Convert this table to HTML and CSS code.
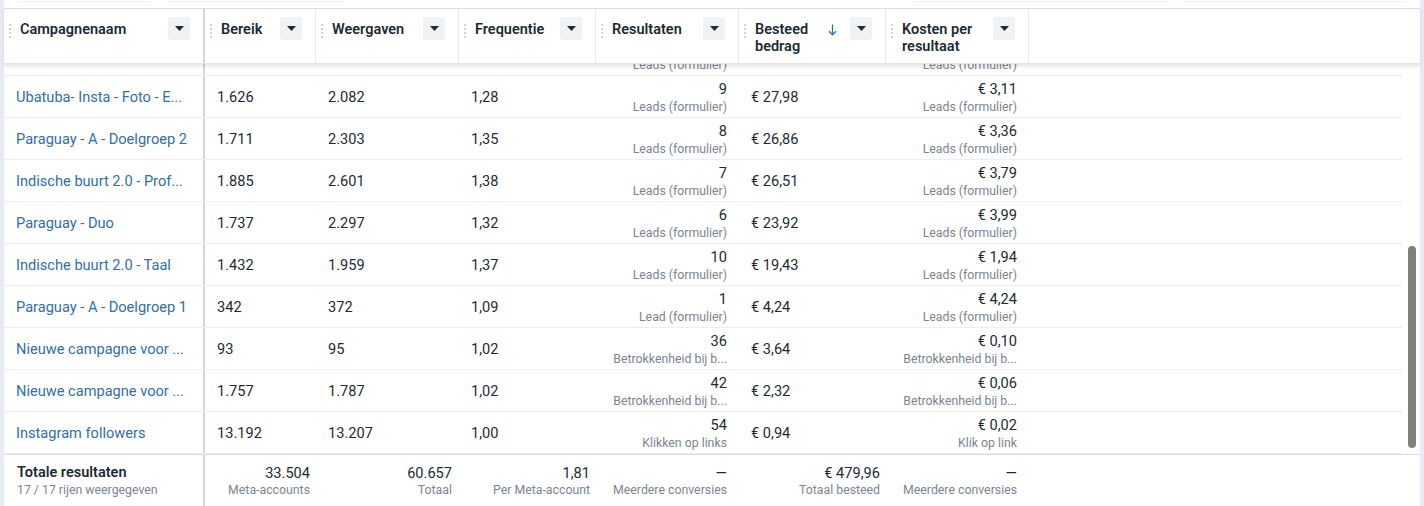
FILE: index.html
```html
<!DOCTYPE html>
<html lang="nl">
<head>
<meta charset="utf-8">
<title>Campagnes</title>
<link rel="stylesheet" href="styles.css">
</head>
<body>
<div class="page">
  <div class="topbar">
    <span class="ghost g1"></span><span class="ghost g2"></span><span class="spacer"></span><span class="ghost g3"></span><span class="ghost g4"></span>
  </div>
  <div class="table">
    <div class="head grid">
      <div class="hc c1"><span class="handle"></span><span class="label">Campagnenaam</span><span class="dd"><svg width="9" height="5" viewBox="0 0 9 5"><path d="M0 0h9L4.5 5z" fill="#1c2b33"/></svg></span></div>
      <div class="hc"><span class="handle"></span><span class="label">Bereik</span><span class="dd"><svg width="9" height="5" viewBox="0 0 9 5"><path d="M0 0h9L4.5 5z" fill="#1c2b33"/></svg></span></div>
      <div class="hc"><span class="handle"></span><span class="label">Weergaven</span><span class="dd"><svg width="9" height="5" viewBox="0 0 9 5"><path d="M0 0h9L4.5 5z" fill="#1c2b33"/></svg></span></div>
      <div class="hc"><span class="handle"></span><span class="label">Frequentie</span><span class="dd"><svg width="9" height="5" viewBox="0 0 9 5"><path d="M0 0h9L4.5 5z" fill="#1c2b33"/></svg></span></div>
      <div class="hc"><span class="handle"></span><span class="label">Resultaten</span><span class="dd"><svg width="9" height="5" viewBox="0 0 9 5"><path d="M0 0h9L4.5 5z" fill="#1c2b33"/></svg></span></div>
      <div class="hc"><span class="handle"></span><span class="label narrow">Besteed bedrag</span><span class="sort"><svg width="9" height="12" viewBox="0 0 9 12"><path d="M4.5 0.5v10M1 7.2l3.5 3.6L8 7.2" fill="none" stroke="#2f70a8" stroke-width="1.3"/></svg></span><span class="dd"><svg width="9" height="5" viewBox="0 0 9 5"><path d="M0 0h9L4.5 5z" fill="#1c2b33"/></svg></span></div>
      <div class="hc"><span class="handle"></span><span class="label narrow2">Kosten per resultaat</span><span class="dd"><svg width="9" height="5" viewBox="0 0 9 5"><path d="M0 0h9L4.5 5z" fill="#1c2b33"/></svg></span></div>
      <div class="hc filler"></div>
    </div>
    <div class="body">
      <div class="rows">
        <div class="row grid partial">
          <div class="c c1"></div>
          <div class="c"></div><div class="c"></div><div class="c"></div>
          <div class="c r"><div class="num">&nbsp;</div><div class="sub">Leads (formulier)</div></div>
          <div class="c"></div>
          <div class="c r"><div class="num">&nbsp;</div><div class="sub">Leads (formulier)</div></div>
          <div class="c"></div>
        </div>
        <div class="row grid">
          <div class="c c1"><a class="name">Ubatuba- Insta - Foto - E...</a></div>
          <div class="c">1.626</div><div class="c">2.082</div><div class="c">1,28</div>
          <div class="c r"><div class="num">9</div><div class="sub">Leads (formulier)</div></div>
          <div class="c">€ 27,98</div>
          <div class="c r"><div class="num">€ 3,11</div><div class="sub">Leads (formulier)</div></div>
          <div class="c"></div>
        </div>
        <div class="row grid">
          <div class="c c1"><a class="name">Paraguay - A - Doelgroep 2</a></div>
          <div class="c">1.711</div><div class="c">2.303</div><div class="c">1,35</div>
          <div class="c r"><div class="num">8</div><div class="sub">Leads (formulier)</div></div>
          <div class="c">€ 26,86</div>
          <div class="c r"><div class="num">€ 3,36</div><div class="sub">Leads (formulier)</div></div>
          <div class="c"></div>
        </div>
        <div class="row grid">
          <div class="c c1"><a class="name">Indische buurt 2.0 - Prof...</a></div>
          <div class="c">1.885</div><div class="c">2.601</div><div class="c">1,38</div>
          <div class="c r"><div class="num">7</div><div class="sub">Leads (formulier)</div></div>
          <div class="c">€ 26,51</div>
          <div class="c r"><div class="num">€ 3,79</div><div class="sub">Leads (formulier)</div></div>
          <div class="c"></div>
        </div>
        <div class="row grid">
          <div class="c c1"><a class="name">Paraguay - Duo</a></div>
          <div class="c">1.737</div><div class="c">2.297</div><div class="c">1,32</div>
          <div class="c r"><div class="num">6</div><div class="sub">Leads (formulier)</div></div>
          <div class="c">€ 23,92</div>
          <div class="c r"><div class="num">€ 3,99</div><div class="sub">Leads (formulier)</div></div>
          <div class="c"></div>
        </div>
        <div class="row grid">
          <div class="c c1"><a class="name">Indische buurt 2.0 - Taal</a></div>
          <div class="c">1.432</div><div class="c">1.959</div><div class="c">1,37</div>
          <div class="c r"><div class="num">10</div><div class="sub">Leads (formulier)</div></div>
          <div class="c">€ 19,43</div>
          <div class="c r"><div class="num">€ 1,94</div><div class="sub">Leads (formulier)</div></div>
          <div class="c"></div>
        </div>
        <div class="row grid">
          <div class="c c1"><a class="name">Paraguay - A - Doelgroep 1</a></div>
          <div class="c">342</div><div class="c">372</div><div class="c">1,09</div>
          <div class="c r"><div class="num">1</div><div class="sub">Lead (formulier)</div></div>
          <div class="c">€ 4,24</div>
          <div class="c r"><div class="num">€ 4,24</div><div class="sub">Leads (formulier)</div></div>
          <div class="c"></div>
        </div>
        <div class="row grid">
          <div class="c c1"><a class="name">Nieuwe campagne voor ...</a></div>
          <div class="c">93</div><div class="c">95</div><div class="c">1,02</div>
          <div class="c r"><div class="num">36</div><div class="sub">Betrokkenheid bij b...</div></div>
          <div class="c">€ 3,64</div>
          <div class="c r"><div class="num">€ 0,10</div><div class="sub">Betrokkenheid bij b...</div></div>
          <div class="c"></div>
        </div>
        <div class="row grid">
          <div class="c c1"><a class="name">Nieuwe campagne voor ...</a></div>
          <div class="c">1.757</div><div class="c">1.787</div><div class="c">1,02</div>
          <div class="c r"><div class="num">42</div><div class="sub">Betrokkenheid bij b...</div></div>
          <div class="c">€ 2,32</div>
          <div class="c r"><div class="num">€ 0,06</div><div class="sub">Betrokkenheid bij b...</div></div>
          <div class="c"></div>
        </div>
        <div class="row grid">
          <div class="c c1"><a class="name">Instagram followers</a></div>
          <div class="c">13.192</div><div class="c">13.207</div><div class="c">1,00</div>
          <div class="c r"><div class="num">54</div><div class="sub">Klikken op links</div></div>
          <div class="c">€ 0,94</div>
          <div class="c r"><div class="num">€ 0,02</div><div class="sub">Klik op link</div></div>
          <div class="c"></div>
        </div>
      </div>
      <div class="thumb"></div>
    </div>
    <div class="foot grid">
      <div class="f c1"><div class="ftitle">Totale resultaten</div><div class="sub">17 / 17 rijen weergegeven</div></div>
      <div class="f r p6"><div class="num">33.504</div><div class="sub">Meta-accounts</div></div>
      <div class="f r p7"><div class="num">60.657</div><div class="sub">Totaal</div></div>
      <div class="f r p6"><div class="num">1,81</div><div class="sub">Per Meta-account</div></div>
      <div class="f r"><div class="num">—</div><div class="sub">Meerdere conversies</div></div>
      <div class="f r p6"><div class="num">€ 479,96</div><div class="sub">Totaal besteed</div></div>
      <div class="f r"><div class="num">—</div><div class="sub">Meerdere conversies</div></div>
      <div class="f"></div>
    </div>
  </div>
</div>
</body>
</html>
```

FILE: styles.css
```css
* { box-sizing: border-box; }
html, body { margin: 0; padding: 0; }
body {
  background: #e7ecf4;
  font-family: "Roboto", "Liberation Sans", Arial, sans-serif;
  color: #1c2b33;
  width: 1424px;
  height: 506px;
  overflow: hidden;
}
.page {
  margin-left: 4px;
  width: 1416px;
  height: 506px;
  background: #fff;
}
.topbar {
  height: 9px;
  border-bottom: 1px solid #dcdfe3;
  display: flex;
  align-items: flex-start;
}
.ghost {
  height: 2px;
  border-bottom: 1px solid #f0f1f3;
}
.g1 { width: 133px; margin-left: 14px; }
.g2 { width: 176px; margin-left: 17px; }
.spacer { flex: 0 0 569px; }
.g3 { width: 257px; }
.g4 { width: 223px; margin-left: 13px; }

.grid {
  display: grid;
  grid-template-columns: 201px 111px 143px 137px 143px 147px 143px 1fr;
}

/* header */
.head {
  height: 55px;
  background: #fff;
  position: relative;
  z-index: 2;
  box-shadow: 0 2px 4px rgba(0, 0, 0, 0.12);
  border-bottom: 1px solid #e3e5e8;
}
.hc {
  display: flex;
  align-items: flex-start;
  padding: 8px 13px 0 5px;
  border-right: 1px solid #e6e8eb;
}
.hc.c1 { border-right: 2px solid #d3d6da; }
.hc.filler { border-right: none; }
.handle {
  width: 2px;
  height: 15px;
  margin-top: 6px;
  flex: none;
  background-image: radial-gradient(circle, #cfd2d6 0.9px, transparent 1.1px);
  background-size: 2px 4px;
}
.label {
  flex: 1;
  margin-left: 9px;
  margin-top: 4px;
  font-size: 14.5px;
  font-weight: 600;
  line-height: 17px;
  color: #1c2b33;
}
.label.narrow { flex: 0 0 66px; }
.label.narrow2 { flex: 1; padding-right: 10px; }
.sort {
  flex: 1;
  display: flex;
  justify-content: flex-end;
  padding-right: 13px;
  margin-top: 7px;
}
.dd {
  width: 22px;
  height: 23px;
  flex: none;
  background: #f0f2f4;
  border-radius: 2px;
  display: flex;
  align-items: center;
  justify-content: center;
}

/* body */
.body {
  height: 390px;
  overflow: hidden;
  position: relative;
}
.rows {
  margin-top: -30px;
  padding-right: 17px;
}
.row {
  height: 42px;
  border-bottom: 1px solid #eceef1;
}
.c {
  padding: 0 12px;
  display: flex;
  flex-direction: column;
  justify-content: center;
  font-size: 14.6px;
  line-height: 18px;
  color: #1c2b33;
  white-space: nowrap;
}
.c.c1 { border-right: 2px solid #d3d6da; padding-left: 12px; }
.c.r { align-items: flex-end; justify-content: flex-start; padding-top: 5px; }
.name {
  color: #2f70a8;
  text-decoration: none;
  font-size: 14.6px;
}
.num { font-size: 14.6px; line-height: 17px; color: #1c2b33; }
.sub { font-size: 12.3px; line-height: 18px; color: #7b8590; white-space: nowrap; }
.thumb {
  position: absolute;
  right: 4px;
  top: 182px;
  width: 8px;
  height: 202px;
  border-radius: 4px;
  background: #808080;
}

/* footer */
.foot {
  border-top: 1px solid #d9dce0;
  height: 52px;
}
.f {
  padding: 9px 12px 0 12px;
  display: flex;
  flex-direction: column;
}
.f.c1 { border-right: 2px solid #d3d6da; padding-left: 13px; }
.f.r { align-items: flex-end; }
.f.p6 { padding-right: 6px; }
.f.p7 { padding-right: 7px; }
.f .num { line-height: 18px; }
.f .sub { line-height: 17px; }
.ftitle { font-size: 14.5px; font-weight: 600; line-height: 18px; }
```
